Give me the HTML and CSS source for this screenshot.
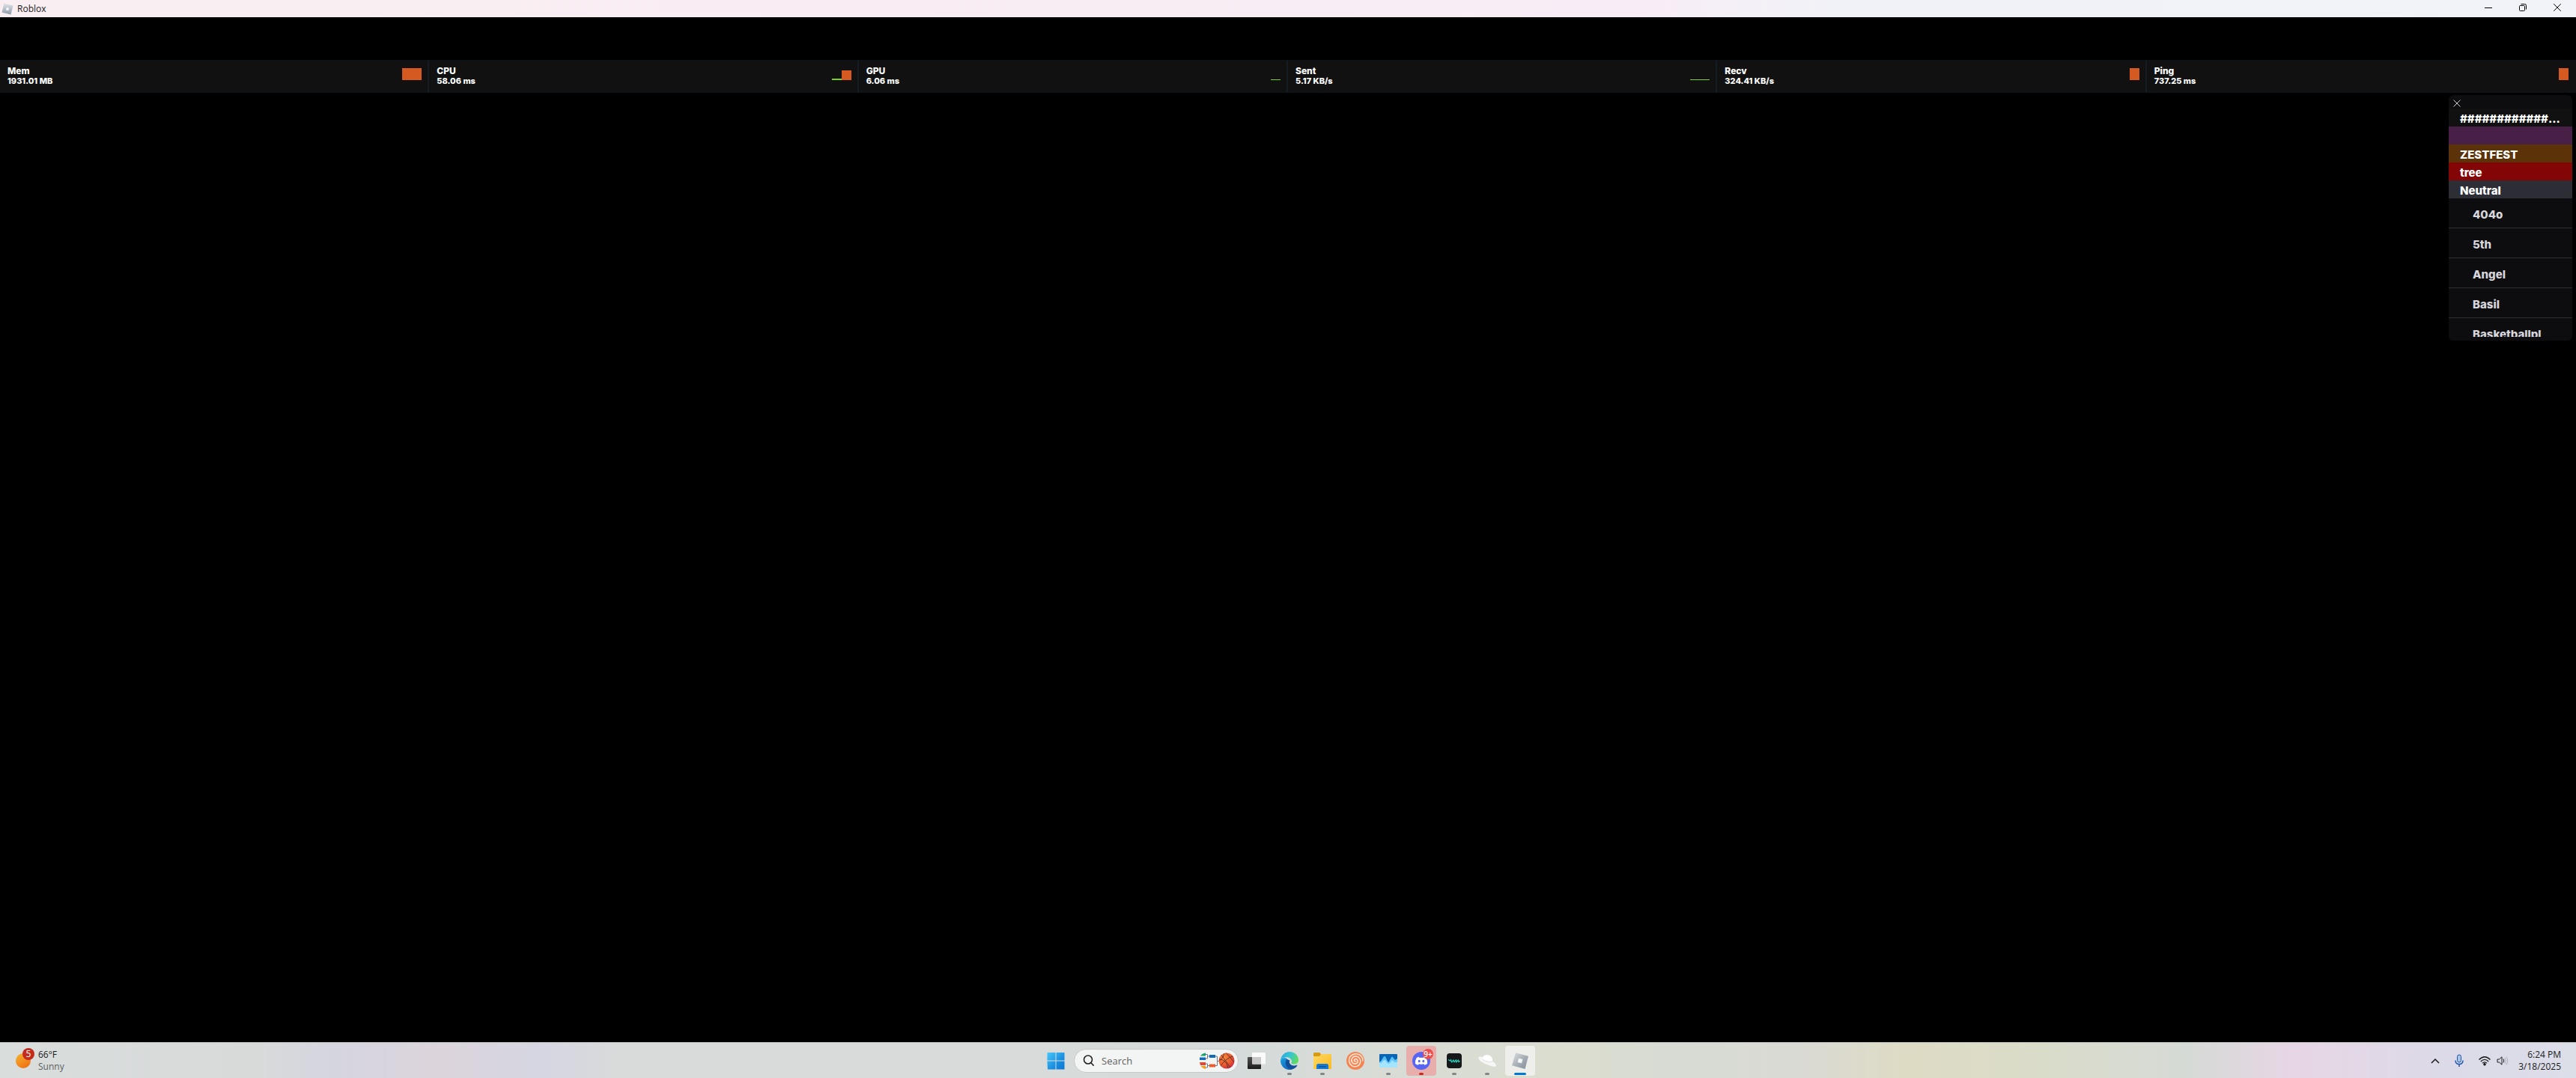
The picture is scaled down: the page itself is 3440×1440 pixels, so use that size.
FILE: index.html
```html
<!DOCTYPE html>
<html lang="en">
<head>
    <title>Roblox</title>
    <meta charset="UTF-8">
    <link rel="stylesheet" href="styles.css">
</head>
<body>
    <header class="titlebar">
        <svg class="app-icon" viewBox="0 0 16 16">
            <defs>
                <linearGradient id="tilt" x1="0" y1="0" x2="0" y2="1">
                    <stop offset="0" stop-color="#e0e4e8"/>
                    <stop offset="1" stop-color="#8c9bab"/>
                </linearGradient>
            </defs>
            <path fill="url(#tilt)" d="M3.5 0.5L15.5 3.5L12.5 15.5L0.5 12.5Z"/>
            <path fill="#fbf8fa" d="M6.800 6L10 6.800L9.200 10L6 9.200Z"/>
        </svg>
        <h1>Roblox</h1>
        <div class="window-buttons">
            <button aria-label="Minimize"><svg viewBox="0 0 10 10"><path d="M0 5.5H10"/></svg></button>
            <button aria-label="Restore"><svg viewBox="0 0 10 10"><rect x="0.5" y="2.5" width="7" height="7" rx="1"/><path d="M2.5 0.5H7.5Q9.5 0.5 9.5 2.5V7.5"/></svg></button>
            <button aria-label="Close"><svg viewBox="0 0 10 10"><path d="M0.2 0.2L9.8 9.8M9.8 0.2L0.2 9.8"/></svg></button>
        </div>
    </header>

    <main class="game">
        <section class="stats">
            <div class="stat">
                <div><h2>Mem</h2><p>1931.01 MB</p></div>
                <div class="graph"><span class="bar high wide"></span></div>
            </div>
            <div class="stat">
                <div><h2>CPU</h2><p>58.06 ms</p></div>
                <div class="graph"><span class="bar low"></span><span class="bar mid"></span></div>
            </div>
            <div class="stat">
                <div><h2>GPU</h2><p>6.06 ms</p></div>
                <div class="graph"><span class="bar idle"></span></div>
            </div>
            <div class="stat">
                <div><h2>Sent</h2><p>5.17 KB/s</p></div>
                <div class="graph"><span class="bar idle wide"></span></div>
            </div>
            <div class="stat">
                <div><h2>Recv</h2><p>324.41 KB/s</p></div>
                <div class="graph"><span class="bar high"></span></div>
            </div>
            <div class="stat">
                <div><h2>Ping</h2><p>737.25 ms</p></div>
                <div class="graph"><span class="bar high"></span></div>
            </div>
        </section>

        <aside class="players">
            <div class="players-top">
                <button aria-label="Close player list"><svg viewBox="0 0 10 10"><path d="M0.5 0.5L9.5 9.5M9.5 0.5L0.5 9.5"/></svg></button>
            </div>
            <h3 class="team title">############...</h3>
            <div class="player-list">
                <h3 class="team purple"></h3>
                <h3 class="team brown">ZESTFEST</h3>
                <h3 class="team red">tree</h3>
                <h3 class="team neutral">Neutral</h3>
                <ul>
                    <li>404o</li>
                    <li>5th</li>
                    <li>Angel</li>
                    <li>Basil</li>
                    <li>Basketballpl</li>
                </ul>
            </div>
        </aside>
    </main>

    <footer class="taskbar">
        <button class="weather">
            <span class="sun"><span class="count">5</span></span>
            <span class="forecast"><span>66°F</span><span class="muted">Sunny</span></span>
        </button>

        <nav class="apps">
            <button class="app" aria-label="Start">
                <svg viewBox="0 0 24 24">
                    <defs>
                        <linearGradient id="win" gradientUnits="userSpaceOnUse" x1="0" y1="0" x2="24" y2="24">
                            <stop offset="0" stop-color="#4ccafb"/>
                            <stop offset="0.6" stop-color="#1a8fe0"/>
                            <stop offset="1" stop-color="#0a74d0"/>
                        </linearGradient>
                    </defs>
                    <path fill="url(#win)" d="M1 1H11.5V11.5H0.5V1.5ZM12.5 1H23.5V11.5H12.5ZM0.5 12.5H11.5V23.5H1ZM12.5 12.5H23.5V23.5H12.5Z"/>
                </svg>
            </button>
            <label class="search">
                <svg class="lens" viewBox="0 0 16 16"><circle cx="7" cy="6.5" r="5.5"/><path d="M11 10.8L14.6 14.6"/></svg>
                <input type="text" placeholder="Search" aria-label="Search">
                <svg class="bracket" viewBox="0 0 48 24">
                    <defs>
                        <radialGradient id="ball" cx="0.35" cy="0.3" r="0.8">
                            <stop offset="0" stop-color="#f58a3c"/>
                            <stop offset="0.6" stop-color="#e9582c"/>
                            <stop offset="1" stop-color="#c4224a"/>
                        </radialGradient>
                    </defs>
                    <path fill="#16a36a" d="M2 5.5Q4.500 2 9 1.500V5.500Z"/>
                    <path fill="#0f6cbd" d="M1 7.500H9V11H1Z"/>
                    <path fill="#e8442e" d="M1 14H9V18H2Z"/>
                    <path fill="#f0a020" d="M2.500 19H9V23Q5 22.500 2.500 19Z"/>
                    <path fill="none" stroke="#6f7988" d="M9 3.500H11.500V9H9M11.500 6H14M9 16H11.500V21H9M11.500 18.500H14M22 6H24.500V18.500H22M24.500 12.500H27"/>
                    <path fill="#0f6cbd" d="M14 4H22V8H14Z"/>
                    <path fill="#ee5a2c" d="M14 16.500H22V20.500H14Z"/>
                    <circle cx="37" cy="12" r="10.500" fill="url(#ball)"/>
                    <path fill="none" stroke="#5b2a2c" stroke-width="0.9" d="M30 4.500Q36 12 42 21M45.500 6Q37 8 29 18.500M36 1.500Q41 6 47 14M27 10Q37 10 39 22M34 2Q33 8 27.500 12"/>
                </svg>
            </label>
            <button class="app" aria-label="Task view">
                <svg viewBox="0 0 24 24">
                    <defs>
                        <linearGradient id="dark" x1="0" y1="0" x2="0" y2="1"><stop offset="0" stop-color="#505050"/><stop offset="1" stop-color="#1c1c1c"/></linearGradient>
                    </defs>
                    <rect x="0" y="7" width="18" height="16" rx="1" fill="url(#dark)"/>
                    <rect x="6" y="1" width="18" height="15.500" rx="1" fill="#fafafa"/>
                    <path d="M6 7H18V16.500H7Q6 16.500 6 15.500Z" fill="#c9c9c9"/>
                </svg>
            </button>
            <button class="app running" aria-label="Microsoft Edge">
                <svg viewBox="0 0 24 24">
                    <defs>
                        <linearGradient id="edge-top" x1="0" y1="0.2" x2="1" y2="0.6">
                            <stop offset="0" stop-color="#2aa6e4"/>
                            <stop offset="0.5" stop-color="#36c6cf"/>
                            <stop offset="1" stop-color="#62dc5c"/>
                        </linearGradient>
                        <linearGradient id="edge-side" x1="0" y1="0" x2="0.6" y2="1">
                            <stop offset="0" stop-color="#1b9de2"/>
                            <stop offset="1" stop-color="#1166b8"/>
                        </linearGradient>
                    </defs>
                    <path fill="url(#edge-side)" d="M0 12A12 12 0 0 0 15 23.600C19 22.500 21.500 20 22.500 17.500C19 19.500 14 19 12 15Q10 9 6 8Q2 8 0 12Z"/>
                    <path fill="#134f98" d="M8.500 10C5 13 6.500 21 14 23.800C18 22.800 21.500 20.500 22.600 17.800C18 20 13 18.500 12 15Q11.500 13 12.500 11.500Z"/>
                    <path fill="url(#edge-top)" d="M0 12C0.500 5 5.500 0 12 0C19 0 24 5 24 11C24 15 21 16.500 18 16.500C15 16.500 13.800 15.500 14.500 14.500C16 12 14 8.500 10 7.500C6 6.700 2 8.500 0 12Z"/>
                </svg>
            </button>
            <button class="app running" aria-label="File Explorer">
                <svg viewBox="0 0 24 24">
                    <defs>
                        <linearGradient id="folder" x1="0" y1="0" x2="1" y2="1"><stop offset="0" stop-color="#ffd964"/><stop offset="1" stop-color="#fbb921"/></linearGradient>
                    </defs>
                    <path fill="#d79a12" d="M0 2.500Q0 1 1.500 1H8L10.500 3.500V7H0Z"/>
                    <path fill="url(#folder)" d="M0 6H8L10.500 3H23Q24 3 24 4V21.500Q24 23 22.500 23H1.500Q0 23 0 21.500Z"/>
                    <path fill="#1479cf" d="M4 23V18.500Q4 16 6.500 16H17.500Q20 16 20 18.500V23Z"/>
                    <path fill="#0b559c" d="M7 19H17V20.500H7Z"/>
                </svg>
            </button>
            <button class="app" aria-label="Swirl">
                <svg viewBox="0 0 24 24">
                    <circle cx="12" cy="12" r="12" fill="#f58452"/>
                    <path fill="none" stroke="#ffe8da" stroke-width="1.500" stroke-linecap="round" d="M12.500 12.500C11 13.500 9.500 11.500 10.800 10.200C12.800 8.500 15.800 10.500 15.200 13.200C14.300 16.500 9.500 17 7.600 14C5.500 10.500 8 6.200 12 6C16.500 5.800 19.500 9.800 18.700 14C17.500 19 12 21 7.800 18.800C3.500 16.500 2.300 11 4.600 7C7.500 2.500 13.500 1.500 17.800 4.200C20.500 6 22 9 22 12"/>
                </svg>
            </button>
            <button class="app running" aria-label="Task Manager">
                <svg viewBox="0 0 24 24">
                    <defs>
                        <linearGradient id="wave" x1="0" y1="0" x2="0" y2="1"><stop offset="0" stop-color="#3fb4f3"/><stop offset="1" stop-color="#9ee2fd"/></linearGradient>
                    </defs>
                    <rect x="0" y="3" width="24" height="18" rx="1" fill="#0a64b4"/>
                    <path fill="url(#wave)" d="M0 14L2.500 12L6 6L8 6L11 13L12.500 14L16 7L17.500 6.500L21 11L24 9V20Q24 21 23 21H1Q0 21 0 20Z"/>
                    <path fill="#a5e4fd" d="M0 15H3L5 12L8 11L11 16H14L17 11L20 14H24V20Q24 21 23 21H1Q0 21 0 20Z"/>
                </svg>
            </button>
            <button class="app running alert" aria-label="Discord">
                <svg viewBox="0 0 24 24">
                    <circle cx="12" cy="12" r="12" fill="#5865f2"/>
                    <path fill="#fff" fill-rule="evenodd" d="M8.800 6.800L9.500 7.900Q12 7.500 14.500 7.900L15.200 6.800Q17 7.100 18.300 7.900Q20.600 11.500 20.100 16Q18.300 17.300 16.300 17.800L15.400 16.300Q12 17.200 8.600 16.300L7.700 17.800Q5.700 17.300 3.900 16Q3.400 11.500 5.700 7.900Q7 7.100 8.800 6.800ZM9.200 10.800A1.500 1.700 0 1 0 9.200 14.200A1.500 1.700 0 1 0 9.200 10.800ZM14.800 10.800A1.500 1.700 0 1 0 14.800 14.200A1.500 1.700 0 1 0 14.800 10.800Z"/>
                </svg>
                <span class="badge">9+</span>
            </button>
            <button class="app running" aria-label="Audio">
                <svg viewBox="0 0 24 24">
                    <rect x="2" y="2" width="20" height="20" rx="4" fill="#151718"/>
                    <path fill="none" stroke="#22c9b4" stroke-width="1.300" stroke-linejoin="round" d="M4 10.500L6.500 12L7.500 10.500L8.500 14L11 11L11.800 13.800L14.500 10.800L14.500 14L17.500 11L17.800 13.500L20 12.500"/>
                </svg>
            </button>
            <button class="app running" aria-label="Planet">
                <svg viewBox="0 0 24 24">
                    <path fill="#f7f7f7" d="M6 7.500C8 3.500 15 3 18 7.500Q19.500 10 18.800 12.500C22 14.500 24 17 24 18.500C23.500 20.500 19 20 13 17.500C6 15 0.500 11.500 0.200 8C0.500 6 3 6 6 7.500Z"/>
                    <path fill="#fff" d="M6 7.500C8 3.500 15 3 18 7.500Q19.500 10 18.800 12.500Q12 14.500 5.500 9.500Z"/>
                    <path fill="none" stroke="#d4d5d4" stroke-width="0.800" d="M5.500 10Q12 14.800 18.800 13"/>
                </svg>
            </button>
            <button class="app running active" aria-label="Roblox">
                <svg viewBox="0 0 24 24">
                    <defs>
                        <linearGradient id="block" x1="0" y1="0" x2="1" y2="1"><stop offset="0" stop-color="#dfe2e5"/><stop offset="0.500" stop-color="#a9b0b8"/><stop offset="1" stop-color="#7f8b98"/></linearGradient>
                    </defs>
                    <path fill="url(#block)" d="M6 1.300L23 5.800L18.500 23L1 18.200Z"/>
                    <path fill="#f7f8f8" d="M10 8.700L15.300 10L14 15.300L8.700 14Z"/>
                </svg>
            </button>
        </nav>

        <div class="tray">
            <button aria-label="Show hidden icons"><svg width="12" height="16" viewBox="0 0 12 16"><path d="M1 11L6 6L11 11" stroke-width="1.500"/></svg></button>
            <button aria-label="Microphone"><svg class="mic" width="12" height="18" viewBox="0 0 12 18"><rect x="3.500" y="1" width="5" height="10" rx="2.500"/><path d="M1 8.500Q1 13.500 6 13.500Q11 13.500 11 8.500M6 13.500V17" fill="none" stroke-width="1.500"/></svg></button>
            <button class="network" aria-label="Network and volume">
                <svg width="16" height="16" viewBox="0 0 16 16"><path d="M0.500 6.500Q8 -1 15.500 6.500M2.800 9Q8 3.800 13.200 9M5 11.200Q8 8.500 11 11.200" stroke-width="1.300"/><circle cx="8" cy="12.800" r="1.300" fill="#1a1a1a"/></svg>
                <svg width="16" height="16" viewBox="0 0 16 16"><path d="M1 6H3.500L7 2.800V13.200L3.500 10H1ZM9 5.500Q10.500 8 9 10.500"/><path d="M11 4Q13.500 8 11 12M13 2.500Q16.500 8 13 13.500" stroke="#b0b0b4"/></svg>
            </button>
            <button class="clock"><time>6:24 PM</time><time>3/18/2025</time></button>
        </div>
    </footer>
</body>
</html>
```
FILE: styles.css
```css
* {
    box-sizing: border-box;
}
body {
    margin: 0;
    min-height: 100vh;
    display: flex;
    flex-direction: column;
    background: #000;
    font-family: "Open Sans", "Noto Sans", sans-serif;
    font-size: 12px;
    color: #1a1a1a;
}
h1, h2, h3, p, ul {
    margin: 0;
    padding: 0;
}
button {
    background: none;
    border: none;
    padding: 0;
    font: inherit;
    color: inherit;
    display: flex;
    align-items: center;
    justify-content: center;
}

/* window title bar */
.titlebar {
    height: 23px;
    display: flex;
    align-items: center;
    padding: 0 2px;
    background: linear-gradient(to right, #f9eef1 0%, #f9edf4 45%, #f8ecf6 63%, #f3f1f7 69%, #f0f2f7 72%, #f2f3f8 100%);
}
.app-icon {
    width: 16px;
    height: 16px;
}
.titlebar h1 {
    margin-left: 5px;
    font-size: 12px;
    font-weight: 400;
    line-height: 16px;
}
.window-buttons {
    display: flex;
    align-self: flex-start;
    margin-left: auto;
}
.window-buttons button {
    width: 46px;
    height: 20px;
}
.window-buttons svg {
    width: 10px;
    height: 10px;
    fill: none;
    stroke: #000;
}

/* game view */
.game {
    flex: 1;
    padding-top: 57px;
    font-family: Inter, sans-serif;
    font-weight: 800;
    color: #fff;
}
.stats {
    display: grid;
    grid-template-columns: repeat(6, 1fr);
    background: #111;
    border-top: 1px solid #0c141c;
    border-bottom: 1px solid #0c141c;
}
.stat {
    height: 42px;
    display: flex;
    justify-content: space-between;
    padding: 7px 8px 0 10px;
    border-right: 2px solid #151c23;
}
.stat:last-child {
    padding-right: 10px;
    border-right: none;
}
.stat h2 {
    font-size: 12px;
    line-height: 14px;
    font-weight: 800;
}
.stat p {
    font-size: 11px;
    line-height: 13px;
}
.graph {
    display: flex;
    align-items: flex-end;
    height: 19px;
}
.bar {
    width: 13px;
}
.wide {
    width: 26px;
}
.high {
    height: 16px;
    background: #d55a22;
}
.mid {
    height: 13px;
    background: #d55a22;
}
.low {
    height: 2px;
    background: #7cd01e;
}
.idle {
    height: 1px;
    background: #7cd01e;
}

/* player list */
.players {
    width: 165px;
    height: 328px;
    margin: 3px 5px 0 auto;
    padding-bottom: 5px;
    display: flex;
    flex-direction: column;
    background: #0d0d0f;
    border-radius: 6px;
    overflow: hidden;
}
.players-top {
    height: 18px;
    flex-shrink: 0;
    padding: 6px;
}
.players-top svg {
    width: 10px;
    height: 10px;
    fill: none;
    stroke: #d0d0d0;
}
.team {
    height: 24px;
    flex-shrink: 0;
    padding: 0 15px;
    font-size: 15px;
    line-height: 27px;
    font-weight: 800;
}
.title {
    padding-right: 0;
    background: #111;
}
.player-list {
    flex: 1;
    overflow: hidden;
}
.purple {
    background: #471f47;
}
.brown {
    background: #5c3209;
}
.red {
    background: #830506;
}
.neutral {
    background: #2d2d36;
}
.player-list li {
    height: 40px;
    padding-left: 32px;
    list-style: none;
    font-size: 15px;
    line-height: 43px;
    color: #d6d6dc;
    border-bottom: 1px solid #2d2d35;
}

/* taskbar */
.taskbar {
    height: 48px;
    display: grid;
    grid-template-columns: 1fr auto 1fr;
    align-items: center;
    border-top: 1px solid #b9bbbb;
    background: linear-gradient(to right, #d9dddc 0%, #d8dada 10%, #d5d5e0 13%, #dcd4db 17%, #d5d6e2 21%, #d9dada 24%, #d9dbda 36%, #d5dbda 48%, #dbddce 61%, #d7dbd4 65%, #dadad4 70%, #dedbc4 74%, #dadcc9 79%, #d6dad6 85%, #e7d6e5 89%, #dcdae8 95%, #dcdee8 100%);
}
.weather {
    justify-self: start;
    padding-left: 21px;
    gap: 10px;
}
.sun {
    position: relative;
    width: 20px;
    height: 20px;
    border-radius: 50%;
    background: linear-gradient(150deg, #f2b632, #f0680c);
}
.count {
    position: absolute;
    top: -7px;
    right: -5px;
    width: 16px;
    height: 16px;
    border-radius: 50%;
    background: #c42b1c;
    color: #fff;
    font-size: 12px;
    line-height: 16px;
}
.forecast {
    display: flex;
    flex-direction: column;
    text-align: left;
    line-height: 16px;
}
.muted {
    color: #5c5f60;
}
.apps {
    display: flex;
    align-items: center;
}
.app {
    position: relative;
    width: 40px;
    height: 40px;
    margin: 0 2px;
    border-radius: 4px;
}
.app svg {
    width: 24px;
    height: 24px;
}
.running::after {
    content: "";
    position: absolute;
    bottom: 1px;
    width: 6px;
    height: 3px;
    border-radius: 2px;
    background: #828585;
}
.alert {
    background: #e8aeac;
}
.alert::after {
    background: #c42b1c;
}
.active {
    background: #eeefeb;
}
.active::after {
    width: 16px;
    background: #0078d4;
}
.badge {
    position: absolute;
    top: 4px;
    right: 4px;
    width: 14px;
    height: 14px;
    border-radius: 7px;
    background: #ea4f50;
    color: #fff;
    font-size: 10px;
    line-height: 14px;
    font-weight: 600;
}
.search {
    width: 220px;
    height: 32px;
    margin: 0 2px;
    padding: 0 4px 0 11px;
    display: flex;
    align-items: center;
    border: 1px solid #c6c9c8;
    border-radius: 16px;
    background: #f3f5f4;
}
.lens {
    width: 16px;
    height: 16px;
    fill: none;
    stroke: #222;
    stroke-width: 1.6;
}
.search input {
    flex: 1;
    min-width: 0;
    padding: 0 0 0 9px;
    border: none;
    outline: none;
    background: none;
    font: inherit;
    font-size: 13px;
}
.search input::placeholder {
    color: #5f6060;
}
.bracket {
    width: 48px;
    height: 24px;
}
.tray {
    justify-self: end;
    display: flex;
    align-items: center;
    padding-right: 20px;
}
.tray svg {
    fill: none;
    stroke: #1a1a1a;
}
.tray .mic {
    fill: #a9c4ea;
    stroke: #1e57ab;
}
.tray button {
    margin-right: 20px;
}
.tray .network {
    gap: 8px;
    margin-right: 13px;
}
.tray .clock {
    flex-direction: column;
    align-items: flex-end;
    margin: 0;
    line-height: 16px;
}
```
